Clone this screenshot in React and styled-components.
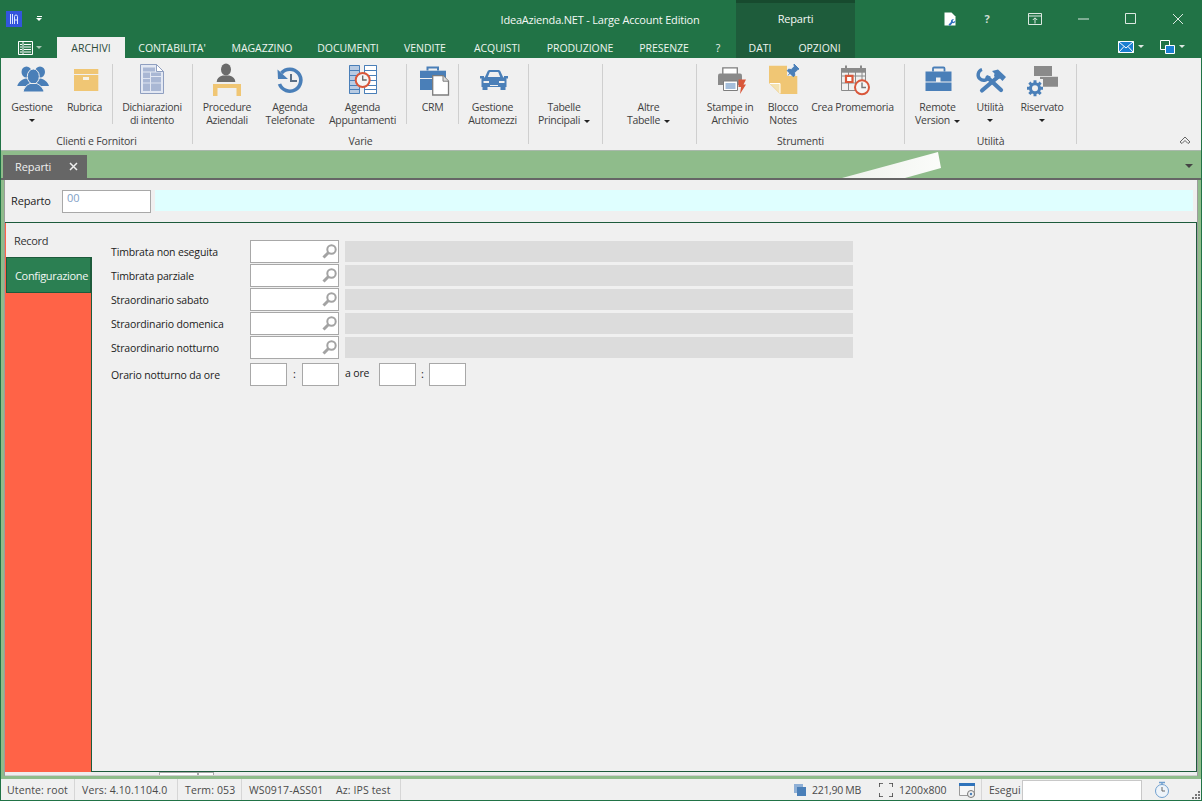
import React from "react";
import styled, { createGlobalStyle } from "styled-components";

const Global = createGlobalStyle`
  html, body { margin: 0; padding: 0; background: #f0f0f0; }
  body { font-family: "Open Sans", "Noto Sans", "Liberation Sans", sans-serif; font-size: 11px; overflow: hidden; }
  * { box-sizing: border-box; }
`;

const Win = styled.div`
  width: 1202px; height: 801px; display: flex; flex-direction: column;
  border-left: 1px solid #217346; border-right: 1px solid #217346; border-bottom: 1px solid #217346;
  background: #f0f0f0; overflow: hidden;
`;
const Header = styled.header`
  height: 58px; margin: 0 -1px; flex: none; background: #217346; color: #fff;
  display: grid; grid-template-columns: 736px 119px 1fr; grid-template-rows: 37px 21px;
`;
const TitleCell = styled.div`display: flex; align-items: center; padding-left: 6px;`;
const AppLogo = styled.div`
  width: 16px; height: 16px; background: #3355dd; display: flex; align-items: center; justify-content: center;
  svg { display: block; }
`;
const Qat = styled.div`margin-left: 14px; display: flex; flex-direction: column; align-items: center; gap: 1px;
  &::before { content: ""; width: 5px; height: 1px; background: #fff; }
  &::after { content: ""; border-left: 3px solid transparent; border-right: 3px solid transparent; border-top: 3px solid #fff; }
`;
const Title = styled.div`margin-left: 458px; font-size: 11px; letter-spacing: -0.2px; white-space: nowrap; color: #f4f8f5; width: 200px; text-align: center; padding-top: 1px;`;
const ContextTab = styled.div`
  grid-column: 2; grid-row: 1 / 3; background: #1e5c3b; border-top: 3px solid #174a2e;
  display: flex; flex-direction: column;
`;
const ContextTitle = styled.div`height: 34px; display: flex; align-items: center; justify-content: center; color: #f4f8f5; padding-bottom: 3px; letter-spacing: -0.2px;`;
const ContextTabs = styled.div`display: flex; height: 21px;`;
const WinControls = styled.div`display: flex; align-items: center; height: 37px; padding-left: 82px; svg { display: block; }`;
const WinBtn = styled.div`width: ${p => p.$w || 48}px; display: flex; justify-content: center;`;
const HelpMark = styled(WinBtn)`color: #cfdcd4; font-weight: 700; font-size: 11px;`;
const TabRow = styled.nav`display: flex; grid-column: 1; grid-row: 2;`;
const FileBtn = styled.div`width: 57px; display: flex; align-items: center; padding-left: 18px; gap: 3px;`;
const Tab = styled.div`
  width: ${p => p.$w}px; height: 21px; display: flex; align-items: center; justify-content: center;
  font-size: 10.5px; white-space: nowrap; letter-spacing: -0.05px;
  background: ${p => p.$active ? "#f0f0f0" : "transparent"};
  color: ${p => p.$active ? "#2e4a3a" : "#eef5f0"};
`;
const TinyArrow = styled.span`
  display: inline-block; border-left: 3px solid transparent; border-right: 3px solid transparent;
  border-top: 3px solid ${p => p.$c || "#dfe9e3"}; vertical-align: middle;
`;
const RightTools = styled.div`grid-column: 3; grid-row: 2; display: flex; align-items: center; padding: 0 0 2px 263px; svg { display: block; }`;
const ToolDrop = styled.div`display: flex; align-items: center; gap: 4px; width: 42px;`;

const Ribbon = styled.section`
  height: 93px; flex: none; display: flex; background: #f0f0f0; border-bottom: 1px solid #a9b8ab; position: relative; padding-top: 6px;
`;
const Group = styled.div`
  width: ${p => p.$w}px; height: 80px; display: flex; flex-direction: column; align-items: stretch;
  border-right: 1px solid #cfcfcf; padding-left: ${p => p.$pl || 0}px;
`;
const GroupItems = styled.div`display: flex; height: 60px; flex: none;`;
const GroupLabel = styled.div`height: 20px; flex: none; text-align: center; color: #3f3f3f; font-size: 10.5px; line-height: 34px; letter-spacing: -0.2px; white-space: nowrap; padding-right: ${p => p.$pr || 0}px;`;
const Item = styled.div`
  width: ${p => p.$w}px; flex: none; display: flex; flex-direction: column; align-items: center; color: #3f3f3f;
  font-size: 10.5px; line-height: 13px; text-align: center; letter-spacing: -0.28px; white-space: nowrap;
  svg { display: block; overflow: visible; flex: none; margin-top: -2px; }
`;
const ItemText = styled.div`margin-top: 3px;`;
const CaretLine = styled.div`height: 13px; display: flex; align-items: center; justify-content: center;`;
const Caret = styled.span`
  display: inline-block; border-left: 3px solid transparent; border-right: 3px solid transparent;
  border-top: 3px solid #222; vertical-align: middle; margin-left: ${p => p.$ml || 0}px;
`;
const ShortSep = styled.div`width: 1px; height: 60px; background: #cfcfcf; flex: none; margin: 0 ${p => p.$m || 0}px;`;
const Collapse = styled.div`position: absolute; right: 10px; bottom: 6px; svg { display: block; }`;

const DocStrip = styled.div`
  height: 29px; flex: none; background: #8fbc8b; padding: 4px 0 0 2px; position: relative; display: flex;
  border-bottom: 2px solid #666;
`;
const DocTab = styled.div`
  width: 84px; height: 23px; background: #666; color: #f0f0f0; display: flex; align-items: center;
  padding: 0 9px 0 12px; justify-content: space-between; font-size: 11px; letter-spacing: -0.1px;
  svg { display: block; }
`;
const Streak = styled.div`
  position: absolute; left: 841px; top: 1px; width: 100px; height: 26px;
  background: linear-gradient(90deg, #eef2ec, #fbfcfa);
  clip-path: polygon(0 100%, 96px 0, 99px 16px, 63px 100%);
`;
const DocMenu = styled.div`position: absolute; right: 8px; top: 6px;`;
const BigCaret = styled(Caret)`border-left-width: 4px; border-right-width: 4px; border-top-width: 4px; border-top-color: #444;`;

const Stage = styled.div`flex: 1; background: #8fbc8b; padding: 0 3px 3px 3px; display: flex; flex-direction: column; min-height: 0;`;
const Panel = styled.div`flex: 1; display: flex; flex-direction: column; border-left: 1px solid #9c9c9c; border-right: 1px solid #9c9c9c; background: #f0f0f0; min-height: 0;`;
const KeyRow = styled.div`height: 42px; flex: none; display: flex; align-items: flex-start; padding: 10px 4px 0 6px;`;
const KeyLabel = styled.label`width: 51px; height: 23px; line-height: 22px; color: #1c1c1c; font-size: 11px; letter-spacing: -0.15px;`;
const KeyInput = styled.div`width: 89px; height: 23px; background: #fff; border: 1px solid #a8a8a8; color: #7f9fc6; padding-left: 4px; line-height: 14px; font-size: 11px;`;
const KeyDesc = styled.div`flex: 1; margin-left: 4px; height: 21px; background: #dfffff;`;
const Body = styled.div`flex: 1; display: flex; min-height: 0; border-top: 1px solid #1d5b3c;`;
const Side = styled.aside`width: 87px; flex: none; background: #ff6347; padding-left: 1px; border-right: 1px solid #1d5b3c; display: flex; flex-direction: column;`;
const SideTab = styled.div`
  height: ${p => p.$h}px; display: flex; align-items: center; padding-left: 8px; font-size: 11px; letter-spacing: -0.32px; white-space: nowrap;
  background: ${p => p.$on ? "#f0f0f0" : "#2b7f52"}; color: ${p => p.$on ? "#333" : "#f2f7f4"};
  ${p => p.$on ? "margin-right:-1px; position:relative;" : "border: 1px solid #1d5b3c;"}
`;
const Main = styled.main`flex: 1; padding: 17px 0 0 19px; border-right: 1px solid #1d5b3c; border-bottom: 1px solid #1d5b3c; display: flex; flex-direction: column; gap: 1px;`;
const FormRow = styled.div`display: flex; height: 23px; align-items: center;`;
const FormLabel = styled.label`width: 139px; color: #1c1c1c; font-size: 10.5px; letter-spacing: -0.15px; flex: none; white-space: nowrap;`;
const LookupBox = styled.div`
  width: 89px; height: 23px; background: #fff; border: 1px solid #a8a8a8; display: flex; align-items: center; justify-content: flex-end; flex: none;
  svg { display: block; }
`;
const DescBox = styled.div`width: 508px; height: 21px; background: #dcdcdc; margin-left: 6px; flex: none;`;
const TimeRow = styled(FormRow)`margin-top: 3px;`;
const TimeBox = styled.div`width: 37px; height: 23px; background: #fff; border: 1px solid #a8a8a8; flex: none;`;
const Colon = styled.span`width: ${p => p.$w}px; text-align: center; flex: none; font-size: 11px; color: #222; padding-bottom: 3px;`;
const AOre = styled.span`width: 40px; flex: none; padding-left: 6px; color: #222; font-size: 10.5px; letter-spacing: -0.15px; padding-bottom: 3px; white-space: nowrap;`;

const ScrollStrip = styled.div`height: 4px; flex: none; background: #eeeeee; display: flex; padding-left: 154px; border-bottom: 1px solid #cfcfcf;`;
const ScrollThumb = styled.div`width: ${p => p.$w}px; height: 3px; background: #fff; border: 1px solid #a8a8a8; border-bottom: none;`;

const Status = styled.footer`height: 21px; flex: none; display: flex; align-items: center; background: #f0f0f0; color: #4a4a4a; font-size: 10.5px; white-space: nowrap; position: relative; svg { display: block; }`;
const Cell = styled.div`width: ${p => p.$w}px; flex: none; height: 100%; display: flex; align-items: center; letter-spacing: ${p => p.$ls ?? 0.12}px; padding-left: ${p => p.$pl ?? 7}px; ${p => p.$sep ? "border-right: 1px solid #d6d6d6;" : ""}`;
const Spacer = styled.div`flex: 1;`;
const RunInput = styled.div`width: 120px; height: 20px; background: #fff; border: 1px solid #c8c8c8; border-width: 1px 1px 0 1px; flex: none;`;
const Grip = styled.div`position: absolute; right: 1px; bottom: 1px; svg { display: block; }`;

const B = "#4a7fb8", T = "#f0c674", G = "#8a8a8a", R = "#d9573a", BG = "#f0f0f0";
const Icon = ({ children }) => <svg width="36" height="36" viewBox="0 0 36 36">{children}</svg>;

const IcoPeople = () => <Icon><g fill={B}>
  <ellipse cx="12.500" cy="10" rx="5" ry="5.500" /><ellipse cx="26" cy="10" rx="5" ry="5.500" />
  <path d="M3.300 24c1-4 5-7 9-7.500l4 2v5.500zM35 24c-1-4-5-7-9-7.500l-4 2v5.500z" />
  <ellipse cx="19.300" cy="14.500" rx="6" ry="7.500" stroke={BG} strokeWidth="1" />
  <path d="M9 30c.5-4 4-7.500 7-8.500h6.500c3 1 7 4.500 7.500 8.500z" stroke={BG} strokeWidth="1" /></g></Icon>;
const IcoBox = () => <Icon><path fill={T} d="M7 7h24.300v5H7zM7 13h24.300v16H7z" /><path fill="#f7f2e6" d="M16 15h6v3h-6z" /></Icon>;
const IcoDoc = () => <Icon>
  <path d="M6.500 2.500h16l7 7v22h-23z" fill="#e3e8f3" stroke="#8f9fc0" /><path d="M22.500 2.500v7h7z" fill="#fff" stroke="#8f9fc0" />
  <path d="M9 5.500h12v4H9zM9 10.500h7V29H9zM17 10.500h10v3.500H17zM17 15h10v14H17z" fill="#a9b7d4" />
  <path d="M9 16.500h7M9 21h18" stroke="#dde3f0" />
</Icon>;
const IcoDesk = () => <Icon><g fill="#6b6b6b"><ellipse cx="17" cy="7.500" rx="5" ry="6" /><path d="M7.700 20c0-3 2-5.500 6-6.500h6.600c4 1 6 3.500 6 6.500z" /></g>
  <path fill={T} d="M4 22h28v12h-4.500v-8H8.500v8H4z" /></Icon>;
const IcoHistory = () => <Icon>
  <path d="M9.500 11a11 11 0 1 1-2 11" fill="none" stroke={B} strokeWidth="3.600" />
  <path d="M5.500 7.500L16 17H6z" fill={B} /><path d="M19 12v7h6" fill="none" stroke="#5b6f86" strokeWidth="2" />
</Icon>;
const IcoTable = () => <Icon>
  <path d="M4 3h11v29H4z" fill="#b8cbe3" /><path d="M4.500 3.500h10v28h-10zM19.500 3.500h12v28h-12z" fill="none" stroke={B} />
  <path d="M19.500 3.500h12v28h-12z" fill="#fff" stroke={B} />
  <path d="M5 8.500h9M20 8.500h11M5 13.500h9M20 13.500h11M5 18.500h9M20 18.500h11M5 23.500h9M20 23.500h11M5 27.500h9M20 27.500h11" stroke={B} />
  <circle cx="17.700" cy="18" r="7" fill="#f5f5f5" stroke={R} strokeWidth="2" /><path d="M17.700 13.500V18h4" fill="none" stroke="#666" strokeWidth="1.300" />
</Icon>;
const IcoCrm = () => <Icon>
  <path d="M12.500 8.500V5.500h10.500v3" fill="none" stroke={B} strokeWidth="2" /><path fill={B} d="M5 8.700h26V28H5z" /><path d="M5 16.500h26" stroke={BG} />
  <path d="M17.700 13.700h10.300l5.500 5.500v13.800H17.700z" fill="#fff" stroke="#7d7d7d" strokeWidth="1.300" /><path d="M28 13.700v5.500h5.500" fill="#ddd" stroke="#7d7d7d" />
</Icon>;
const IcoCar = () => <Icon><g fill={B}>
  <path fillRule="evenodd" d="M9.500 16l3-6.500c.5-1 1-1.500 2.500-1.500h8c1.500 0 2 .5 2.500 1.500l3 6.500zM12.800 15h12.400l-2-5h-8.400z" />
  <path d="M5 14h4v2.500H5zM29 14h4v2.500h-4zM8 15.500h22c1 0 1.500 1 1.500 2V25h-25v-7.500c0-1 .5-2 1.500-2z" />
  <path d="M7.500 25h5v3h-5zM25.500 25h5v3h-5z" /></g>
  <path fill={BG} d="M8.500 19h5.500v2H8.500zM24 19h5.500v2H24zM15 23h8v1h-8z" />
</Icon>;
const IcoPrinter = () => <Icon>
  <path d="M10.800 5.800h14.500v8.500H10.800z" fill="#fff" stroke="#7d7d7d" strokeWidth="1.300" />
  <path d="M8 11.500h20a2 2 0 0 1 2 2V23H6v-9.500a2 2 0 0 1 2-2z" fill="#8a8a8a" />
  <path d="M11.500 19h14v9.500h-14z" fill="#fff" stroke="#7d7d7d" /><path d="M13.500 22h10M13.500 24h10M13.500 26h10" stroke={B} strokeWidth="1.100" />
  <path d="M26.500 17.500h7.500l-2.500 5h2.500l-6 9.500 1-7h-2.500z" fill={R} />
</Icon>;
const IcoNote = () => <Icon>
  <path d="M4 3.700h28.300V32H15L4 21z" fill={T} /><path d="M5 21.500h10v10" fill="#f4e3b2" stroke="#fff" />
  <path d="M22 1h13v13H22z" fill={BG} />
  <path d="M29 2l5 5-1.500.7-3 3 .3 2.800-1.500 1.200-6-6 1.200-1.500 2.800.3 3-3zM25.500 10.500l-2.500 3" fill={B} stroke={B} />
</Icon>;
const IcoCalendar = () => <Icon>
  <path d="M6.500 6.500h24v22h-24zM6.500 14h24M6.500 21h24M13.500 10v18.500M20.500 10v18.500M27 10v14" fill="none" stroke={G} />
  <path d="M6 6.300h25v4.400H6z" fill={G} /><path d="M10 3.500h2v5h-2zM25 3.500h2v5h-2z" fill={G} />
  <path d="M11 13.800h6.500v6.200H11z" fill="#fff" stroke={R} strokeWidth="2.200" />
  <circle cx="27" cy="25.300" r="7" fill="#f5f5f5" stroke={R} strokeWidth="2" /><path d="M27 20.500v5h4" fill="none" stroke="#777" strokeWidth="1.400" />
</Icon>;
const IcoCase = () => <Icon>
  <path d="M13 9.500V6.500a1 1 0 0 1 1-1h9.500a1 1 0 0 1 1 1v3" fill="none" stroke={B} strokeWidth="1.800" />
  <path fill={B} d="M5.500 9.500h26v10h-26zM5.500 20.500h26V29h-26z" /><path fill={BG} d="M16 15.500h4.500V20H16z" />
</Icon>;
const IcoTools = () => <Icon><g fill="none" stroke={B} strokeLinecap="round">
  <path d="M10 7.500A5.500 5.500 0 1 0 17 14" strokeWidth="3.400" strokeLinecap="butt" />
  <path d="M15.500 15.500L29 28" strokeWidth="4.200" />
  <path d="M27 14L10 28.500" strokeWidth="4.200" /></g>
  <path d="M20 9l6-1.500 8 7.500-3.500 4-2.500-2.500-3 1-3-3.500.500-2.500z" fill={B} />
</Icon>;
const IcoReserved = () => <Icon>
  <path fill={G} d="M10 4h18v10H10zM16 14.700h18v10H16z" />
  <path fill={BG} d="M2 17h17v17H2z" />
  <g transform="translate(11 26.300)"><circle r="4.500" fill="none" stroke={B} strokeWidth="3" />
    <path d="M-1.500-8h3v3h-3zM-1.500 5h3v3h-3zM-8-1.500h3v3h-3zM5-1.500h3v3H5z" fill={B} />
    <path d="M-1.500-8h3v3h-3zM-1.500 5h3v3h-3zM-8-1.500h3v3h-3zM5-1.500h3v3H5z" fill={B} transform="rotate(45)" /></g>
</Icon>;

const RItem = ({ w, icon: I, lines, caret }) => (
  <Item $w={w}>
    <I />
    <ItemText>
      {lines.map((l, i) => <div key={i}>{l}{caret === "inline" && i === lines.length - 1 && <Caret $ml={4} />}</div>)}
      {caret === "below" && <CaretLine><Caret /></CaretLine>}
    </ItemText>
  </Item>
);

const Spacer36 = () => <Icon />;

const Search = () => (
  <svg width="17" height="17" viewBox="0 0 17 17"><circle cx="10.500" cy="6.500" r="4.200" fill="none" stroke="#a3a3a3" strokeWidth="2" /><path d="M7.500 9.500l-5 5" stroke="#a3a3a3" strokeWidth="3" /></svg>
);

const topTabs = [["ARCHIVI", 68, true], ["CONTABILITA'", 94], ["MAGAZZINO", 86], ["DOCUMENTI", 86], ["VENDITE", 68], ["ACQUISTI", 76], ["PRODUZIONE", 90], ["PRESENZE", 78], ["?", 30]];
const formRows = ["Timbrata non eseguita", "Timbrata parziale", "Straordinario sabato", "Straordinario domenica", "Straordinario notturno"];

export default function App() {
  return (
    <>
      <Global />
      <Win>
        <Header>
          <TitleCell>
            <AppLogo>
              <svg width="12" height="12" viewBox="0 0 12 12"><path d="M2.500 1v10M4.500 1v10M6.500 11V3.500a1.500 1.500 0 0 1 3 0V11M6.500 7h3" fill="none" stroke="#dfe6ff" strokeWidth="1" /></svg>
            </AppLogo>
            <Qat />
            <Title>IdeaAzienda.NET - Large Account Edition</Title>
          </TitleCell>
          <ContextTab>
            <ContextTitle>Reparti</ContextTitle>
            <ContextTabs>
              <Tab $w={48}>DATI</Tab>
              <Tab $w={71}>OPZIONI</Tab>
            </ContextTabs>
          </ContextTab>
          <WinControls>
            <WinBtn $w={26}>
              <svg width="16" height="16" viewBox="0 0 16 16"><path d="M2.500 1.500h7l4 4v9h-11z" fill="#fff" /><path d="M12 8l-1.500 2 1 1 2-1.500c0 2-1.500 3-3 2.500L8 15l-1.500-1.500L9 11c-.5-1.500.5-3 3-3z" fill="#2f6fc0" /></svg>
            </WinBtn>
            <HelpMark>?</HelpMark>
            <WinBtn>
              <svg width="14" height="12" viewBox="0 0 14 12"><path d="M.5.500h13v11H.5zM.5 3h13M7 10.500V5M4.800 7L7 4.800 9.200 7" fill="none" stroke="#dce8e1" /></svg>
            </WinBtn>
            <WinBtn>
              <svg width="11" height="11" viewBox="0 0 11 11"><path d="M0 6h11" stroke="#dce8e1" /></svg>
            </WinBtn>
            <WinBtn $w={47}>
              <svg width="11" height="11" viewBox="0 0 11 11"><path d="M.5.500h10v10H.5z" fill="none" stroke="#dce8e1" /></svg>
            </WinBtn>
            <WinBtn>
              <svg width="12" height="12" viewBox="0 0 12 12"><path d="M1 1l10 10M11 1L1 11" stroke="#dce8e1" /></svg>
            </WinBtn>
          </WinControls>
          <TabRow>
            <FileBtn>
              <svg width="15" height="14" viewBox="0 0 15 14"><path d="M.5.500h14v13H.5z" fill="#2f7a50" stroke="#fff" /><path d="M5 .500v13M6 3.500h7M6 6h7M6 8.500h7M6 11h7M2 3.500h2M2 6h2M2 8.500h2M2 11h2" stroke="#fff" /></svg>
              <TinyArrow $c="#a9c5b4" />
            </FileBtn>
            {topTabs.map(([t, w, a]) => <Tab key={t} $w={w} $active={a}>{t}</Tab>)}
          </TabRow>
          <RightTools>
            <ToolDrop>
              <svg width="16" height="12" viewBox="0 0 16 12"><path d="M0 0h16v12H0z" fill="#1b7fd0" /><path d="M.5.500L8 7l7.500-6.500M.5 11.500L6 5.500M15.500 11.500L10 5.500" fill="none" stroke="#fff" /><path d="M.5.500h15v11H.5z" fill="none" stroke="#fff" /></svg>
              <TinyArrow />
            </ToolDrop>
            <ToolDrop>
              <svg width="15" height="14" viewBox="0 0 15 14"><path d="M.5.500h9v9h-9z" fill="#217346" stroke="#fff" /><path d="M5.500 5.500h9v8h-9z" fill="#1b7fd0" stroke="#fff" /></svg>
              <TinyArrow />
            </ToolDrop>
          </RightTools>
        </Header>

        <Ribbon>
          <Group $w={192} $pl={4}>
            <GroupItems>
              <RItem w={54} icon={IcoPeople} lines={["Gestione"]} caret="below" />
              <RItem w={51} icon={IcoBox} lines={["Rubrica"]} />
              <ShortSep $m={2} />
              <RItem w={74} icon={IcoDoc} lines={["Dichiarazioni", "di intento"]} />
            </GroupItems>
            <GroupLabel $pr={4}>Clienti e Fornitori</GroupLabel>
          </Group>
          <Group $w={336}>
            <GroupItems>
              <RItem w={68} icon={IcoDesk} lines={["Procedure", "Aziendali"]} />
              <RItem w={58} icon={IcoHistory} lines={["Agenda", "Telefonate"]} />
              <RItem w={87} icon={IcoTable} lines={["Agenda", "Appuntamenti"]} />
              <ShortSep />
              <RItem w={51} icon={IcoCrm} lines={["CRM"]} />
              <ShortSep />
              <RItem w={67} icon={IcoCar} lines={["Gestione", "Automezzi"]} />
            </GroupItems>
            <GroupLabel>Varie</GroupLabel>
          </Group>
          <Group $w={74}>
            <GroupItems><RItem w={70} icon={Spacer36} lines={["Tabelle", "Principali"]} caret="inline" /></GroupItems>
          </Group>
          <Group $w={94}>
            <GroupItems><RItem w={91} icon={Spacer36} lines={["Altre", "Tabelle"]} caret="inline" /></GroupItems>
          </Group>
          <Group $w={208}>
            <GroupItems>
              <RItem w={66} icon={IcoPrinter} lines={["Stampe in", "Archivio"]} />
              <RItem w={40} icon={IcoNote} lines={["Blocco", "Notes"]} />
              <RItem w={99} icon={IcoCalendar} lines={["Crea Promemoria"]} />
            </GroupItems>
            <GroupLabel>Strumenti</GroupLabel>
          </Group>
          <Group $w={172}>
            <GroupItems>
              <RItem w={65} icon={IcoCase} lines={["Remote", "Version"]} caret="inline" />
              <RItem w={40} icon={IcoTools} lines={["Utilità"]} caret="below" />
              <RItem w={64} icon={IcoReserved} lines={["Riservato"]} caret="below" />
            </GroupItems>
            <GroupLabel>Utilità</GroupLabel>
          </Group>
          <Collapse>
            <svg width="12" height="8" viewBox="0 0 12 8"><path d="M1 6l5-5 5 5-2 1.500-3-3-3 3z" fill="none" stroke="#666" /></svg>
          </Collapse>
        </Ribbon>

        <DocStrip>
          <DocTab>
            <span>Reparti</span>
            <svg width="9" height="9" viewBox="0 0 9 9"><path d="M1 1l7 7M8 1L1 8" stroke="#f0f0f0" strokeWidth="1.500" /></svg>
          </DocTab>
          <Streak />
          <DocMenu><BigCaret /></DocMenu>
        </DocStrip>

        <Stage>
          <Panel>
            <KeyRow>
              <KeyLabel>Reparto</KeyLabel>
              <KeyInput>00</KeyInput>
              <KeyDesc />
            </KeyRow>
            <Body>
              <Side>
                <SideTab $on $h={34}>Record</SideTab>
                <SideTab $h={36}>Configurazione</SideTab>
              </Side>
              <Main>
                {formRows.map(r => (
                  <FormRow key={r}>
                    <FormLabel>{r}</FormLabel>
                    <LookupBox><Search /></LookupBox>
                    <DescBox />
                  </FormRow>
                ))}
                <TimeRow>
                  <FormLabel>Orario notturno da ore</FormLabel>
                  <TimeBox /><Colon $w={15}>:</Colon><TimeBox />
                  <AOre>a ore</AOre>
                  <TimeBox /><Colon $w={13}>:</Colon><TimeBox />
                </TimeRow>
              </Main>
            </Body>
            <ScrollStrip><ScrollThumb $w={39} /><ScrollThumb $w={16} /></ScrollStrip>
          </Panel>
        </Stage>

        <Status>
          <Cell $w={74} $pl={6} $sep>Utente: root</Cell>
          <Cell $w={103} $sep>Vers: 4.10.1104.0</Cell>
          <Cell $w={64} $sep>Term: 053</Cell>
          <Cell $w={88}>WS0917-ASS01</Cell>
          <Cell $w={71} $pl={6} $sep>Az: IPS test</Cell>
          <Spacer />
          <Cell $w={18} $pl={0}>
            <svg width="12" height="12" viewBox="0 0 12 12"><path d="M0 0h9v9H0z" fill="#8fb0d6" /><path d="M3 3h9v9H3z" fill="#4a7fb8" /></svg>
          </Cell>
          <Cell $w={67} $pl={0} $ls={-0.3}>221,90 MB</Cell>
          <Cell $w={20} $pl={0}>
            <svg width="14" height="14" viewBox="0 0 14 14"><path d="M0 4V0h4M10 0h4v4M14 10v4h-4M4 14H0v-4" fill="none" stroke="#444" strokeWidth="1.600" /></svg>
          </Cell>
          <Cell $w={60} $pl={0} $ls={0}>1200x800</Cell>
          <Cell $w={23} $pl={0} $sep>
            <svg width="17" height="16" viewBox="0 0 17 16"><path d="M.5 1.500h15v12H.5z" fill="#f6f6f6" stroke="#9a9a9a" /><path d="M0 1h16v3H0z" fill="#2f73bb" /><circle cx="12" cy="12" r="3.500" fill="#f0f0f0" stroke="#777" /><circle cx="12" cy="12" r="1.200" fill="#4a7fb8" /></svg>
          </Cell>
          <Cell $w={40} $pl={7} $ls={0}>Esegui</Cell>
          <RunInput />
          <Cell $w={59} $pl={12}>
            <svg width="16" height="18" viewBox="0 0 16 18"><circle cx="8" cy="10" r="6.500" fill="#eef4fa" stroke="#6f9fcf" /><path d="M8 6v4h3" fill="none" stroke="#666" /><path d="M5 1.500h6M8 1.500v2" stroke="#6f9fcf" strokeWidth="1.400" /></svg>
          </Cell>
          <Grip>
            <svg width="8" height="8" viewBox="0 0 8 8" fill="#777"><path d="M6 0h2v2H6zM3 3h2v2H3zM6 3h2v2H6zM0 6h2v2H0zM3 6h2v2H3zM6 6h2v2H6z" /></svg>
          </Grip>
        </Status>
      </Win>
    </>
  );
}
